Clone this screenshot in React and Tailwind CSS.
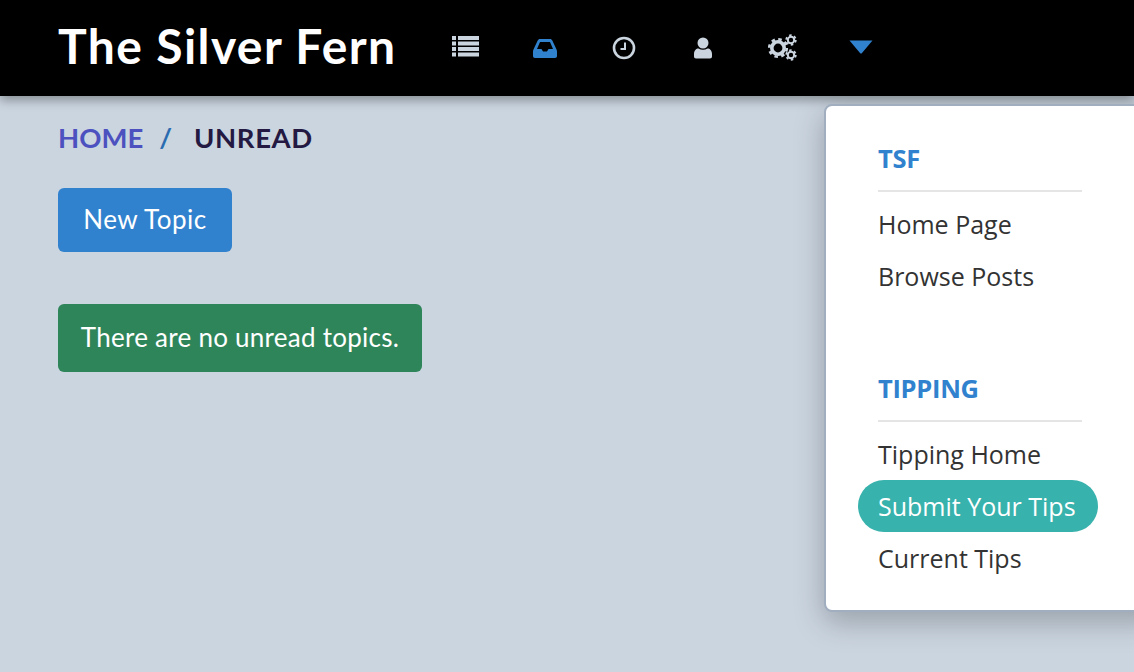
import React from "react";

const ListIcon = () => (
  <svg width="28" height="22" viewBox="0 0 28 22" fill="#cbd5e0" className="block">
    <rect x="0" y="0" width="4" height="4" /><rect x="6" y="0" width="21" height="4" />
    <rect x="0" y="5.500" width="4" height="4" /><rect x="6" y="5.500" width="21" height="4" />
    <rect x="0" y="11" width="4" height="4" /><rect x="6" y="11" width="21" height="4" />
    <rect x="0" y="16.500" width="4" height="4" /><rect x="6" y="16.500" width="21" height="4" />
  </svg>
);
const InboxIcon = () => (
  <svg width="24" height="19" viewBox="0 0 24 19" fill="#3182ce" className="block">
    <path
      fillRule="evenodd"
      d="M7 0H17C18.200 0 18.800.6 19.300 1.600L23.300 10C23.700 10.800 24 11.500 24 12.500V17C24 18.200 23.200 19 22 19H2C.8 19 0 18.200 0 17V12.500C0 11.500.3 10.800.7 10L4.700 1.600C5.200.6 5.800 0 7 0ZM7 3 4 10H8.500L10 12.500H14L15.500 10H20L17 3Z"
    />
  </svg>
);
const ClockIcon = () => (
  <svg width="24" height="24" viewBox="0 0 24 24" fill="none" stroke="#cbd5e0" className="block">
    <circle cx="12" cy="12" r="10" strokeWidth="2.600" />
    <path d="M13 6.500V13H8.500" strokeWidth="2" />
  </svg>
);
const UserIcon = () => (
  <svg width="20" height="22" viewBox="0 0 20 22" fill="#cbd5e0" className="block">
    <circle cx="10" cy="6" r="5.500" />
    <path d="M1 17c0-3.500 2.200-5.500 4.500-5.500 1.300.8 2.800 1.200 4.500 1.200s3.200-.4 4.500-1.200C16.800 11.500 19 13.500 19 17v2.500c0 1.200-.8 2-2 2H3c-1.200 0-2-.8-2-2z" />
  </svg>
);
const CogsIcon = () => (
  <svg width="30" height="27" viewBox="0 0 30 27" fill="none" stroke="#cbd5e0" className="block">
    <circle cx="10" cy="14" r="6.200" strokeWidth="3.600" />
    <circle cx="10" cy="14" r="8.800" strokeWidth="2.600" strokeDasharray="3.500 3.410" />
    <circle cx="23" cy="6" r="3.200" strokeWidth="2" />
    <circle cx="23" cy="6" r="4.800" strokeWidth="1.800" strokeDasharray="2.500 2.530" />
    <circle cx="23" cy="21" r="3.200" strokeWidth="2" />
    <circle cx="23" cy="21" r="4.800" strokeWidth="1.800" strokeDasharray="2.500 2.530" />
  </svg>
);
const Caret = () => (
  <svg width="24" height="14" viewBox="0 0 24 14" fill="#3182ce" className="block">
    <path d="M0.500 0.500H23.500L13 13a1.300 1.300 0 0 1-2 0z" />
  </svg>
);

const Item = ({ children, active }) => (
  <a
    className={
      active
        ? "block h-[52px] -ml-5 -mr-4 pl-5 rounded-full bg-[#38b2ac] text-white leading-[52px]"
        : "block h-[52px] text-[#333333] leading-[52px]"
    }
  >
    {children}
  </a>
);

const Heading = ({ children }) => (
  <div className="h-[57px] pt-[4px] border-b-2 border-[#e5e5e5] text-[#3182ce] font-bold text-[25.5px] leading-[38px] tracking-[-0.3px]">
    {children}
  </div>
);

export default function App() {
  return (
    <div className="relative h-[672px] overflow-hidden bg-[#cbd5e0] font-['Lato',sans-serif]">
      <header className="h-24 bg-black flex items-center pl-[58px] shadow-[0_4px_10px_rgba(0,0,0,0.35)] relative">
        <h1 className="w-[393px] text-white font-bold text-[48px] leading-none tracking-[1.4px] -mt-[4px]">
          The Silver Fern
        </h1>
        <nav className="flex items-center">
          <span className="w-[81px] pl-px flex -mt-[2px]"><ListIcon /></span>
          <span className="w-[80px] pl-px flex"><InboxIcon /></span>
          <span className="w-[81px] flex"><ClockIcon /></span>
          <span className="w-[75px] flex"><UserIcon /></span>
          <span className="w-[81px] flex -mt-[2px]"><CogsIcon /></span>
          <span className="flex -mt-[2px]"><Caret /></span>
        </nav>
      </header>

      <main className="pl-[58px]">
        <div className="flex items-center h-[84px] font-bold text-[27.5px]">
          <span className="text-[#4c51bf]">HOME</span>
          <span className="text-[#2b6cb0] ml-[16px]">/</span>
          <span className="text-[#231942] ml-[22px] tracking-[0.6px]">UNREAD</span>
        </div>
        <button className="block w-[174px] h-16 mt-2 pb-[2px] rounded-md bg-[#3182ce] text-white text-[26px] tracking-[0.5px]">
          New Topic
        </button>
        <div className="mt-[52px] w-[364px] h-[68px] pb-[2px] rounded-md bg-[#2f855a] text-white text-[26px] tracking-[0.26px] flex items-center justify-center">
          There are no unread topics.
        </div>
      </main>

      <div className="absolute left-[824px] top-[104px] w-[340px] h-[508px] bg-white rounded-lg border-2 border-[#a0aec0] pl-[52px] pt-[29px] shadow-[0_10px_30px_rgba(0,0,0,0.25)] font-['Open_Sans'] text-[25px]">
        <div className="w-[204px]">
          <Heading>TSF</Heading>
          <div className="pt-[6px]">
            <Item>Home Page</Item>
            <Item>Browse Posts</Item>
          </div>
          <div className="mt-[63px]">
            <Heading>TIPPING</Heading>
          </div>
          <div className="pt-[6px]">
            <Item>Tipping Home</Item>
            <Item active>Submit Your Tips</Item>
            <Item>Current Tips</Item>
          </div>
        </div>
      </div>
    </div>
  );
}
